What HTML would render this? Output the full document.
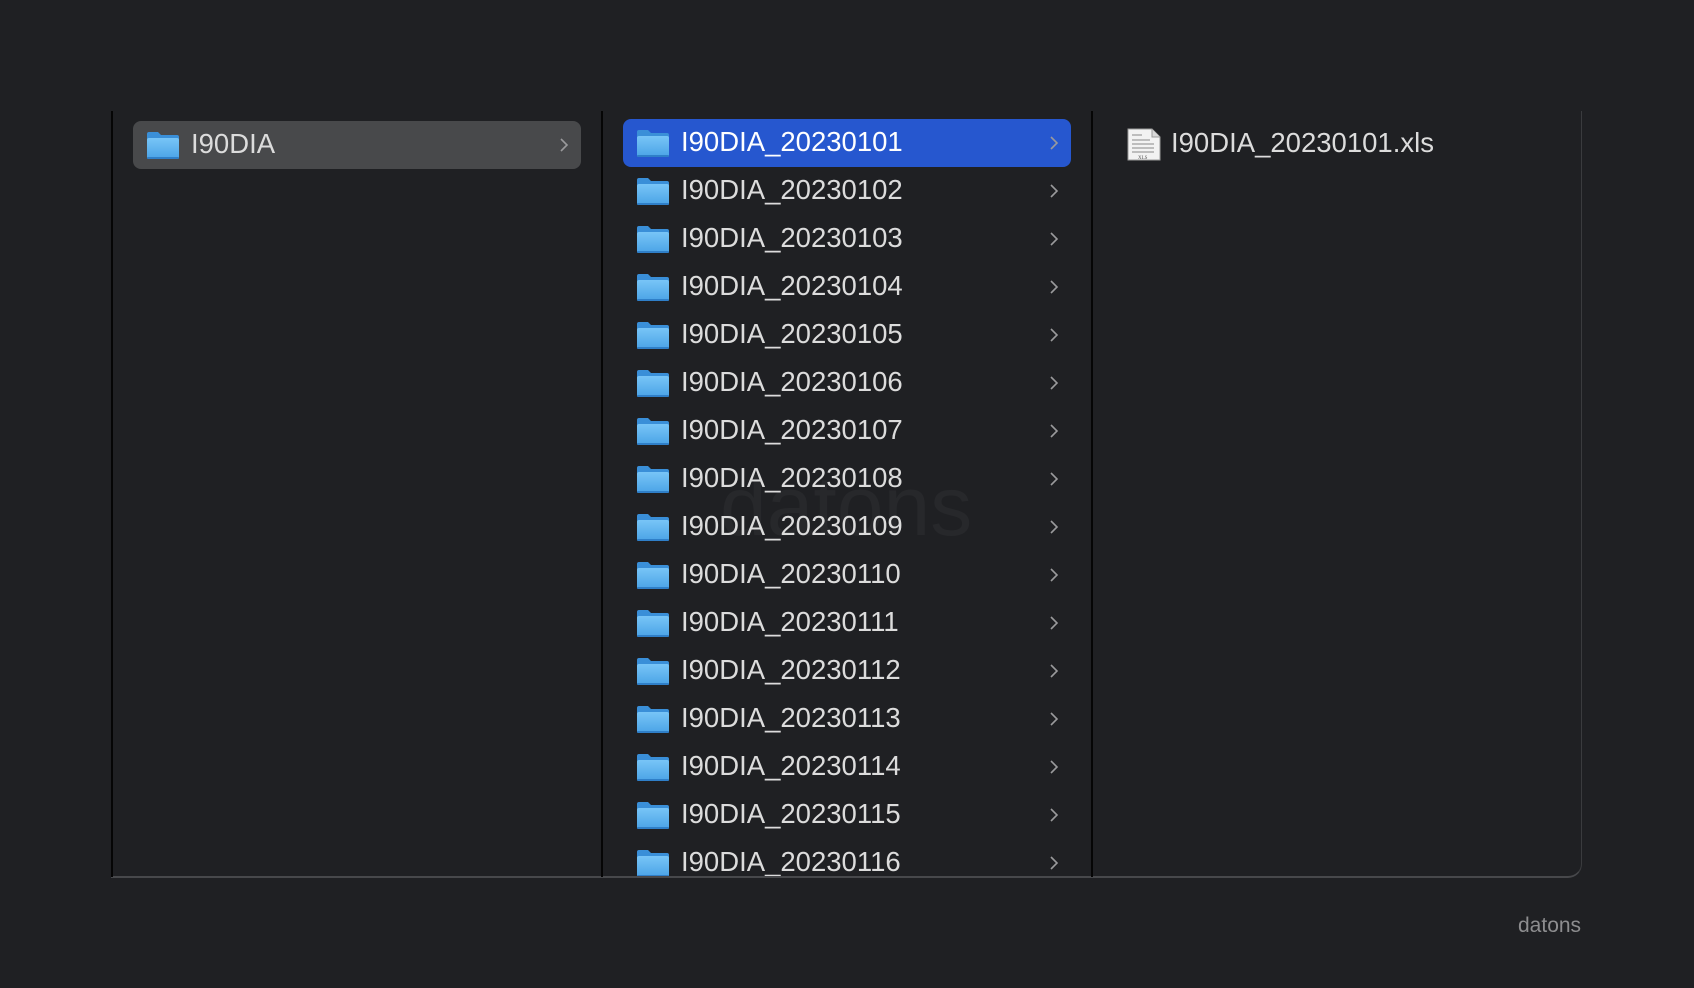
<!DOCTYPE html>
<html><head><meta charset="utf-8"><style>
html,body{margin:0;padding:0;}
body{width:1694px;height:988px;background:#1f2023;position:relative;overflow:hidden;font-family:"Liberation Sans",Arial,sans-serif;}
.frame{position:absolute;left:111px;top:111px;width:1470px;height:765px;border-right:1px solid #3a3b3e;border-bottom:2px solid #47484b;border-bottom-right-radius:14px;}
.vl{position:absolute;top:111px;height:766px;width:2px;background:#050505;}
.row{position:absolute;height:48px;width:448px;color:#dcdcdc;font-size:27.5px;}
.row .t{position:absolute;left:58px;top:7px;white-space:nowrap;}
.sel{background:#2657cf;border-radius:8px;color:#fff;}
.gray{background:#48494b;border-radius:8px;}
.fold{position:absolute;left:13px;top:10px;width:34px;height:29px;}
.chev{position:absolute;right:12px;top:16px;}
.sel .chev path{stroke:#fff}
.wm{position:absolute;left:720px;top:458px;font-size:84px;color:#27282b;}
.foot{position:absolute;left:1518px;top:914px;font-size:21px;color:#8d8d8f;}
.c2{left:623px;}
</style></head><body>
<div class="wm">datons</div>
<div class="frame"></div>
<div class="vl" style="left:111px"></div>
<div class="vl" style="left:601px"></div>
<div class="vl" style="left:1091px"></div>

<svg width="0" height="0" style="position:absolute"><defs>
<linearGradient id="fg" x1="0" y1="0" x2="0" y2="1"><stop offset="0" stop-color="#78c5f7"/><stop offset="1" stop-color="#4aa3e6"/></linearGradient>
<symbol id="f" viewBox="0 0 34 29"><path d="M1 3 Q1 1 3 1 H12 L15 4 H31 Q33 4 33 6 V10 H1Z" fill="#3a8fd8"/><rect x="1" y="7" width="32" height="21" rx="2" fill="url(#fg)"/><rect x="1" y="26" width="32" height="2" rx="1" fill="#2f7fc8"/></symbol>
<symbol id="c" viewBox="0 0 10 16"><path d="M2 2 L8 8 L2 14" fill="none" stroke="#9a9a9c" stroke-width="1.6"/></symbol>
</defs></svg>

<div class="row gray" style="left:133px;top:121px;">
<svg class="fold"><use href="#f"/></svg><span class="t">I90DIA</span>
<svg class="chev" width="10" height="16"><use href="#c"/></svg></div>

<div class="row c2 sel" style="top:119px"><svg class="fold"><use href="#f"/></svg><span class="t">I90DIA_20230101</span><svg class="chev" width="10" height="16"><use href="#c"/></svg></div>
<div class="row c2" style="top:167px"><svg class="fold"><use href="#f"/></svg><span class="t">I90DIA_20230102</span><svg class="chev" width="10" height="16"><use href="#c"/></svg></div>
<div class="row c2" style="top:215px"><svg class="fold"><use href="#f"/></svg><span class="t">I90DIA_20230103</span><svg class="chev" width="10" height="16"><use href="#c"/></svg></div>
<div class="row c2" style="top:263px"><svg class="fold"><use href="#f"/></svg><span class="t">I90DIA_20230104</span><svg class="chev" width="10" height="16"><use href="#c"/></svg></div>
<div class="row c2" style="top:311px"><svg class="fold"><use href="#f"/></svg><span class="t">I90DIA_20230105</span><svg class="chev" width="10" height="16"><use href="#c"/></svg></div>
<div class="row c2" style="top:359px"><svg class="fold"><use href="#f"/></svg><span class="t">I90DIA_20230106</span><svg class="chev" width="10" height="16"><use href="#c"/></svg></div>
<div class="row c2" style="top:407px"><svg class="fold"><use href="#f"/></svg><span class="t">I90DIA_20230107</span><svg class="chev" width="10" height="16"><use href="#c"/></svg></div>
<div class="row c2" style="top:455px"><svg class="fold"><use href="#f"/></svg><span class="t">I90DIA_20230108</span><svg class="chev" width="10" height="16"><use href="#c"/></svg></div>
<div class="row c2" style="top:503px"><svg class="fold"><use href="#f"/></svg><span class="t">I90DIA_20230109</span><svg class="chev" width="10" height="16"><use href="#c"/></svg></div>
<div class="row c2" style="top:551px"><svg class="fold"><use href="#f"/></svg><span class="t">I90DIA_20230110</span><svg class="chev" width="10" height="16"><use href="#c"/></svg></div>
<div class="row c2" style="top:599px"><svg class="fold"><use href="#f"/></svg><span class="t">I90DIA_20230111</span><svg class="chev" width="10" height="16"><use href="#c"/></svg></div>
<div class="row c2" style="top:647px"><svg class="fold"><use href="#f"/></svg><span class="t">I90DIA_20230112</span><svg class="chev" width="10" height="16"><use href="#c"/></svg></div>
<div class="row c2" style="top:695px"><svg class="fold"><use href="#f"/></svg><span class="t">I90DIA_20230113</span><svg class="chev" width="10" height="16"><use href="#c"/></svg></div>
<div class="row c2" style="top:743px"><svg class="fold"><use href="#f"/></svg><span class="t">I90DIA_20230114</span><svg class="chev" width="10" height="16"><use href="#c"/></svg></div>
<div class="row c2" style="top:791px"><svg class="fold"><use href="#f"/></svg><span class="t">I90DIA_20230115</span><svg class="chev" width="10" height="16"><use href="#c"/></svg></div>
<div class="row c2" style="top:839px;height:37px;overflow:hidden"><svg class="fold"><use href="#f"/></svg><span class="t">I90DIA_20230116</span><svg class="chev" width="10" height="16"><use href="#c"/></svg></div>

<div class="row" style="left:1125px;top:120px;width:400px;">
<svg style="position:absolute;left:2px;top:8px" width="34" height="33" viewBox="0 0 34 33"><path d="M1 1 H25 L33 9 V32 H1Z" fill="#f2f2f2" stroke="#9a9a9a"/><path d="M25 1 V9 H33" fill="#d8d8d8" stroke="#9a9a9a"/><g fill="#bdbdbd"><rect x="5" y="6" width="10" height="2"/><rect x="5" y="11" width="18" height="2"/><rect x="5" y="15" width="22" height="2"/><rect x="5" y="19" width="22" height="2"/><rect x="5" y="23" width="22" height="2"/></g><text x="11" y="31" font-size="5" fill="#555" font-family="Liberation Serif">XLS</text></svg>
<span class="t" style="left:46px">I90DIA_20230101.xls</span></div>

<div class="foot">datons</div>
</body></html>
